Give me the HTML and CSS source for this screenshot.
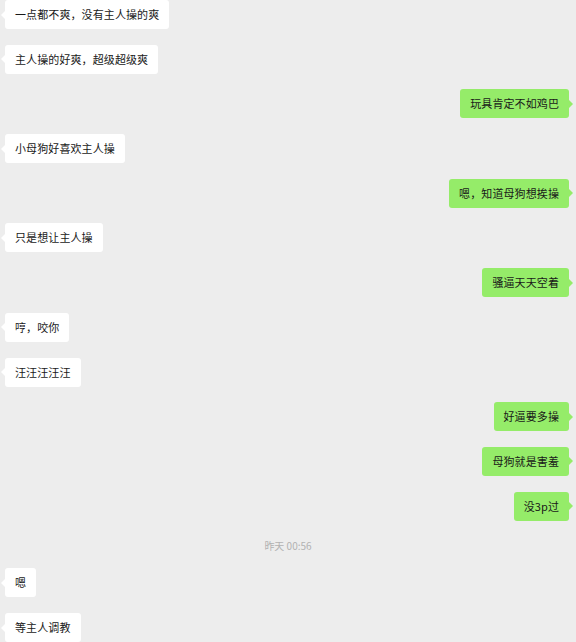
FILE: index.html
```html
<!DOCTYPE html>
<html lang="zh-CN">
<head>
<meta charset="UTF-8">
<meta name="viewport" content="width=device-width, initial-scale=1.0">
<title>聊天记录</title>
<link rel="stylesheet" href="styles.css">
</head>
<body>

<div class="chat">
  <div class="row left"><div class="bubble">一点都不爽，没有主人操的爽</div></div>
  <div class="row left"><div class="bubble">主人操的好爽，超级超级爽</div></div>
  <div class="row right"><div class="bubble">玩具肯定不如鸡巴</div></div>
  <div class="row left"><div class="bubble">小母狗好喜欢主人操</div></div>
  <div class="row right"><div class="bubble">嗯，知道母狗想挨操</div></div>
  <div class="row left"><div class="bubble">只是想让主人操</div></div>
  <div class="row right"><div class="bubble">骚逼天天空着</div></div>
  <div class="row left"><div class="bubble">哼，咬你</div></div>
  <div class="row left"><div class="bubble">汪汪汪汪汪</div></div>
  <div class="row right"><div class="bubble">好逼要多操</div></div>
  <div class="row right"><div class="bubble">母狗就是害羞</div></div>
  <div class="row right"><div class="bubble">没3p过</div></div>
  <div class="time">昨天 00:56</div>
  <div class="row left"><div class="bubble">嗯</div></div>
  <div class="row left"><div class="bubble">等主人调教</div></div>
</div>

</body>
</html>
```

FILE: styles.css
```css
html, body {
  margin: 0;
  height: 100%;
  overflow: hidden;
}
body {
  background: #ededed;
  font-family: "Noto Sans CJK SC", "Noto Sans", sans-serif;
  color: #191919;
}
.chat {
  display: flex;
  flex-direction: column;
  gap: 15.7px;
  padding: 0 7px 0 5px;
}
.row {
  display: flex;
}
.row.right {
  justify-content: flex-end;
}
.bubble {
  position: relative;
  height: 29px;
  line-height: 29px;
  padding: 0 10px;
  font-size: 11px;
  letter-spacing: 0.1px;
  border-radius: 3px;
  background: #fff;
  white-space: nowrap;
}
.right .bubble {
  background: #95ec69;
}
.bubble::before {
  content: "";
  position: absolute;
  top: 50%;
  margin-top: -4px;
  border: 4px solid transparent;
}
.left .bubble::before {
  left: -8px;
  border-right-color: #fff;
}
.right .bubble::before {
  right: -8px;
  border-left-color: #95ec69;
}
.time {
  text-align: center;
  font-size: 10px;
  line-height: 14px;
  padding: 2.5px 0 0 2px;
  color: #b2b2b2;
}
```
